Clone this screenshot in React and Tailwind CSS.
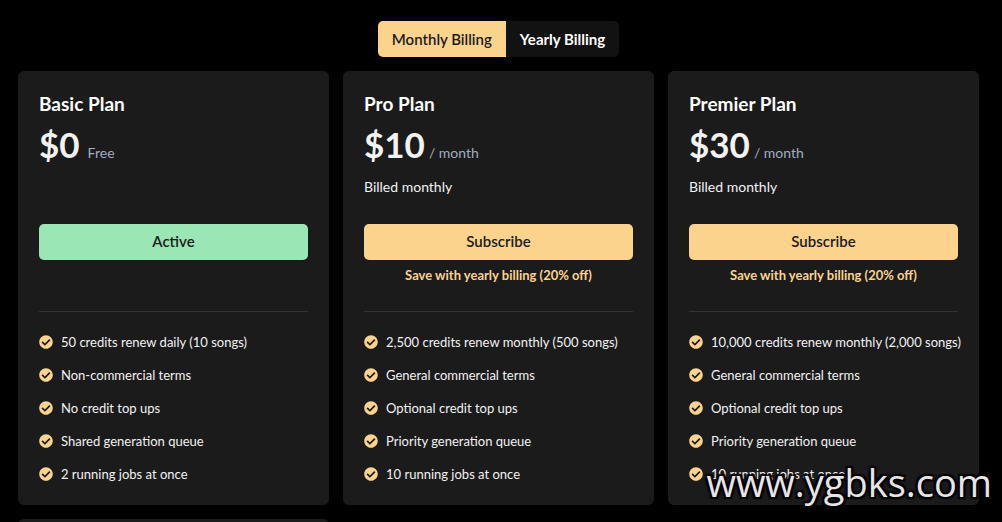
import React, { useState } from "react";
import clsx from "clsx";
import { FaCheckCircle } from "react-icons/fa";

const plans = [
  {
    name: "Basic Plan",
    price: "$0",
    period: "Free",
    active: true,
    features: [
      "50 credits renew daily (10 songs)",
      "Non-commercial terms",
      "No credit top ups",
      "Shared generation queue",
      "2 running jobs at once",
    ],
  },
  {
    name: "Pro Plan",
    price: "$10",
    period: "/ month",
    billed: "Billed monthly",
    promo: "Save with yearly billing (20% off)",
    features: [
      "2,500 credits renew monthly (500 songs)",
      "General commercial terms",
      "Optional credit top ups",
      "Priority generation queue",
      "10 running jobs at once",
    ],
  },
  {
    name: "Premier Plan",
    price: "$30",
    period: "/ month",
    billed: "Billed monthly",
    promo: "Save with yearly billing (20% off)",
    features: [
      "10,000 credits renew monthly (2,000 songs)",
      "General commercial terms",
      "Optional credit top ups",
      "Priority generation queue",
      "10 running jobs at once",
    ],
  },
];

function BillingToggle({ billing, setBilling }) {
  const base = "h-9 px-[14px] text-[15px]";
  const on = "bg-[#fbd38d] font-semibold text-[#1b1b1b]";
  const off = "bg-[#121212] font-bold text-white";

  return (
    <div className="flex justify-center">
      <div className="flex overflow-hidden rounded-[5px]">
        <button type="button" className={clsx(base, billing === "monthly" ? on : off)} onClick={() => setBilling("monthly")}>
          Monthly Billing
        </button>
        <button type="button" className={clsx(base, billing === "yearly" ? on : off)} onClick={() => setBilling("yearly")}>
          Yearly Billing
        </button>
      </div>
    </div>
  );
}

function PlanCard({ plan }) {
  return (
    <section className="rounded-md bg-[#1b1b1b] px-[21px] pt-[22px] pb-5">
      <h2 className="text-[19px] leading-[22px] font-bold text-white">{plan.name}</h2>
      <div className="mt-2 flex items-baseline gap-1">
        <span className="text-[35px] leading-[42px] font-bold text-[#f2f2f2]">{plan.price}</span>
        <span className={clsx("text-[14px] text-[#a0aec0]", plan.active && "pl-1")}>{plan.period}</span>
      </div>
      <p className="mt-[11px] min-h-[22px] text-[14px] leading-[22px]">{plan.billed}</p>
      <button
        type="button"
        className={clsx(
          "mt-[26px] h-9 w-full rounded-[5px] pb-0.5 text-[15px] font-semibold text-[#1b1b1b]",
          plan.active ? "bg-[#9ae6b4]" : "bg-[#fbd38d]"
        )}
      >
        {plan.active ? "Active" : "Subscribe"}
      </button>
      <p className="mt-1 min-h-[22px] text-center text-[13px] leading-[22px] font-bold text-[#fbd38d]">{plan.promo}</p>
      <hr className="mt-[25px] border-[#333333]" />
      <ul className="mt-[19px] flex flex-col gap-[11px]">
        {plan.features.map((feature) => (
          <li key={feature} className="flex items-center gap-2 text-[13px] leading-[22px]">
            <FaCheckCircle className="size-[14px] shrink-0 text-[#fbd38d]" />
            <span className="whitespace-nowrap">{feature}</span>
          </li>
        ))}
      </ul>
    </section>
  );
}

function App() {
  const [billing, setBilling] = useState("monthly");

  return (
    <main className="relative h-screen overflow-hidden bg-black pt-[21px] pr-[23px] pl-[18px] font-['Lato',sans-serif] text-[#f2f2f2]">
      <BillingToggle billing={billing} setBilling={setBilling} />
      <div className="mt-[14px] grid grid-cols-3 gap-[14px]">
        {plans.map((plan) => (
          <PlanCard key={plan.name} plan={plan} />
        ))}
        {/* next row starts just under the fold */}
        <section className="h-40 rounded-md bg-[#1b1b1b]" />
      </div>
      <div className="absolute right-2.5 bottom-2.5 font-['Open_Sans',sans-serif] text-[38px] leading-[60px] text-[#e6e6e6] [text-shadow:-2px_-2px_1px_#000,2px_-2px_1px_#000,-2px_2px_1px_#000,2px_2px_1px_#000,0_0_3px_#000]">
        www.ygbks.com
      </div>
    </main>
  );
}

export default App;
